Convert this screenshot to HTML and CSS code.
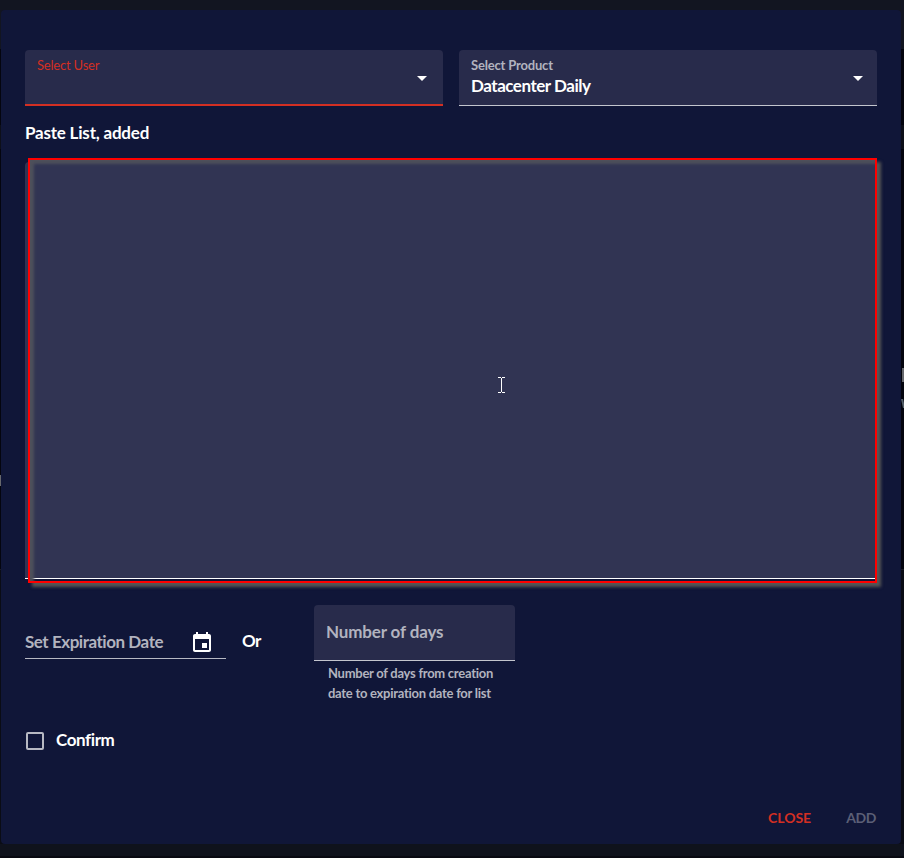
FILE: index.html
```html
<!DOCTYPE html>
<html lang="en">
<head>
<meta charset="utf-8">
<title>Add list</title>
<link rel="stylesheet" href="styles.css">
</head>
<body>
<div class="edge edge-left"></div>
<div class="edge edge-right"></div>
<main class="dialog">
  <div class="selects">
    <div class="field field-error">
      <span class="label label-user">Select User</span>
      <svg class="arrow" viewBox="0 0 10 5"><path d="M0 0h10L5 5z"/></svg>
    </div>
    <div class="field">
      <span class="label label-product">Select Product</span>
      <span class="value">Datacenter Daily</span>
      <svg class="arrow" viewBox="0 0 10 5"><path d="M0 0h10L5 5z"/></svg>
    </div>
  </div>
  <div class="heading"><span class="paste">Paste List, added</span></div>
  <div class="list-area">
    <div class="highlight"></div>
    <svg class="cursor" viewBox="0 0 7 16" shape-rendering="crispEdges"><path d="M0 0h3v1h1V0h3v1H4v14h3v1H4v-1H3v1H0v-1h3V1H0z"/></svg>
  </div>
  <div class="expiry">
    <div class="date">
      <span class="date-label">Set Expiration Date</span>
      <svg class="calendar" viewBox="0 0 24 24"><path d="M17 12h-5v5h5v-5zM16 1v2H8V1H6v2H5c-1.11 0-2 .9-2 2v14c0 1.1.89 2 2 2h14c1.1 0 2-.9 2-2V5c0-1.1-.9-2-2-2h-1V1h-2zm3 18H5V8h14v11z"/></svg>
    </div>
    <span class="or">Or</span>
    <div class="days">
      <div class="days-field"><span class="days-label">Number of days</span></div>
      <div class="hint"><span class="hint-a">Number of days from creation</span><br><span class="hint-b">date to expiration date for list</span></div>
    </div>
  </div>
  <div class="confirm"><span class="box"></span><span class="confirm-label">Confirm</span></div>
  <div class="actions"><span class="close">CLOSE</span><span class="add">ADD</span></div>
</main>
</body>
</html>
```
FILE: styles.css
```css
* { box-sizing: border-box; }
body {
  margin: 0;
  height: 858px;
  padding: 10px 3px 14px 1px;
  overflow: hidden;
  position: relative;
  background: linear-gradient(#121521 0 49px, #04050f 49px 125px, #0d0f19 125px 149px, #04050f 149px 569px, #1a1c25 569px 570px, #0a0c15 570px 844px, #0f121c 844px 856px, #080911 856px);
  font-family: Lato, "Liberation Sans", sans-serif;
  font-size: 17px;
  font-weight: 700;
  color: #fff;
  white-space: nowrap;
}
.edge { position: absolute; background: #66676d; }
.edge-left { left: 0; top: 475px; width: 1px; height: 11px; }
.edge-right { left: 902px; top: 368px; width: 2px; height: 14px; }
.edge-right::after { content: ""; position: absolute; top: 31px; left: 0; width: 2px; height: 9px; background: #55606b; transform: skewX(12deg); }
.dialog {
  height: 834px;
  padding: 40px 24px 0;
  background: #101638;
  border-radius: 4px;
}
.selects { display: grid; grid-template-columns: 418px 418px; gap: 16px; }
.field {
  position: relative;
  height: 56px;
  padding: 7px 12px;
  display: flex;
  flex-direction: column;
  background: #282b4b;
  border-radius: 4px 4px 0 0;
  border-bottom: 1px solid #c3c5ce;
}
.field-error { border-bottom: 2px solid #d32f23; }
.label { font-size: 13px; line-height: 16px; color: #b2b3bf; }
.label-user { font-weight: 400; color: #d32f23; letter-spacing: -.2px; }
.label-product { letter-spacing: -.18px; }
.value { margin-top: 1px; line-height: 24px; letter-spacing: -.47px; }
.arrow { position: absolute; right: 14px; top: 26px; width: 10px; height: 5px; fill: #fff; }
.field-error .arrow { right: 16px; }
.heading { height: 56px; padding-top: 15px; line-height: 24px; letter-spacing: -.2px; }
.list-area {
  position: relative;
  height: 417px;
  background: #313453;
  border-radius: 4px 4px 0 0;
  border-bottom: 1px solid #fff;
}
.highlight {
  position: absolute;
  left: 3px;
  top: -4px;
  width: 849px;
  height: 425px;
  border: 2px solid #f00;
  box-shadow: 4px 4px 3px #555, inset 4px 4px 3px #4e505b;
}
.cursor { position: absolute; left: 473px; top: 215px; width: 7px; height: 16px; fill: #fff; }
.expiry { display: flex; height: 122px; padding-top: 26px; }
.date {
  width: 201px;
  height: 54px;
  padding: 25px 12px 0 0;
  display: flex;
  justify-content: space-between;
  border-bottom: 1px solid #b7b9c3;
  color: #b2b3bf;
  line-height: 24px;
}
.date-label { letter-spacing: -.46px; }
.calendar { width: 24px; height: 24px; margin-top: 1px; fill: #fff; }
.or { width: 72px; margin: 24px 0 0 16px; line-height: 24px; letter-spacing: -.5px; }
.days { width: 201px; }
.days-field {
  height: 56px;
  padding: 15px 12px;
  line-height: 24px;
  letter-spacing: -.14px;
  color: #b2b3bf;
  background: #282b4b;
  border-radius: 4px 4px 0 0;
  border-bottom: 1px solid #c3c5ce;
}
.hint { padding: 2px 14px; font-size: 13px; line-height: 20px; letter-spacing: -.27px; color: #b2b3bf; }
.confirm { display: flex; align-items: center; gap: 12px; height: 24px; margin: 28px 0 0 1px; line-height: 24px; letter-spacing: -.4px; }
.confirm-label { margin-top: -2px; }
.box { width: 18px; height: 18px; border: 2px solid #b7b9c3; border-radius: 2px; }
.actions { display: flex; justify-content: flex-end; gap: 35px; margin-top: 53px; font-size: 14px; line-height: 24px; }
.close { color: #d32f23; }
.add { color: #5b5f76; letter-spacing: -.4px; padding-right: 1px; }
```
